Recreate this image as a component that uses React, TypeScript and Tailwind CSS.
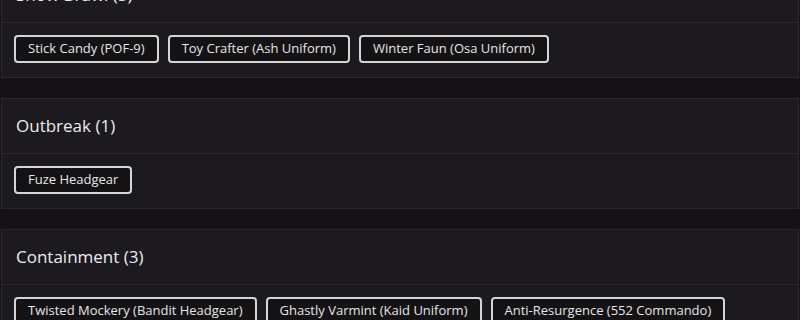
import React from "react";

interface Section {
  title: string;
  items: string[];
}

const sections: Section[] = [
  {
    title: "Snow Brawl",
    items: [
      "Stick Candy (POF-9)",
      "Toy Crafter (Ash Uniform)",
      "Winter Faun (Osa Uniform)",
    ],
  },
  { title: "Outbreak", items: ["Fuze Headgear"] },
  {
    title: "Containment",
    items: [
      "Twisted Mockery (Bandit Headgear)",
      "Ghastly Varmint (Kaid Uniform)",
      "Anti-Resurgence (552 Commando)",
    ],
  },
];

function EventCard({ section }: { section: Section }) {
  return (
    <div className="border border-[#2a282c] bg-[#1c1a1e]">
      <div className="h-[55px] flex items-center px-[14px] border-b border-[#2a282c]">
        <h2 className="text-[17px] font-medium text-[#ececec]">
          {section.title} ({section.items.length})
        </h2>
      </div>
      <div className="flex flex-wrap gap-[9px] px-3 pt-3 pb-[14px]">
        {section.items.map((item) => (
          <button
            key={item}
            type="button"
            className="h-7 px-3 rounded-[4px] border-2 border-[#d6d6d6] bg-[#141215] text-[13px] text-[#e6e6e6]"
          >
            {item}
          </button>
        ))}
      </div>
    </div>
  );
}

export default function App() {
  return (
    <div
      className="h-[320px] overflow-hidden bg-[#141215] px-px"
      style={{ fontFamily: '"Open Sans", "Noto Sans", sans-serif' }}
    >
      <div className="-mt-[33px] flex flex-col gap-5">
        {sections.map((s) => (
          <EventCard key={s.title} section={s} />
        ))}
      </div>
    </div>
  );
}
